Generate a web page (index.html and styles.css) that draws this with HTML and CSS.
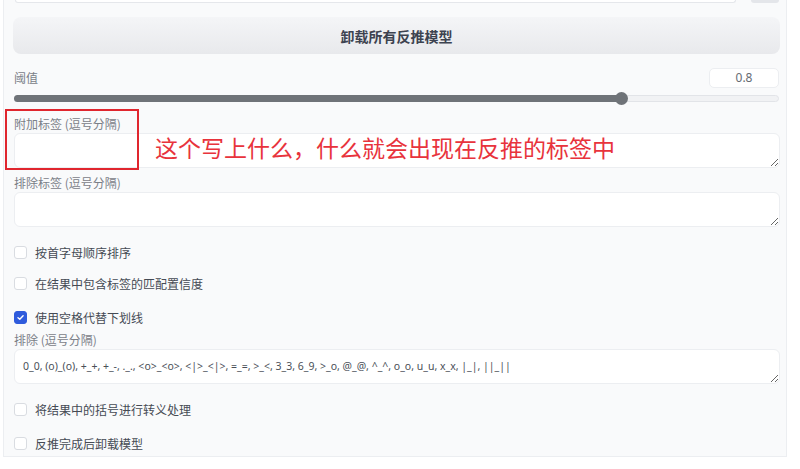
FILE: index.html
```html
<!DOCTYPE html>
<html lang="zh">
<head>
<meta charset="utf-8">
<link rel="stylesheet" href="styles.css">
</head>
<body>
<div class="panel">
  <div class="topbar">
    <div class="top-input"></div>
    <div class="top-btn"></div>
  </div>
  <button class="unload">卸载所有反推模型</button>
  <div class="thresh-row">
    <span class="label">阈值</span>
    <div class="num">0.8</div>
  </div>
  <div class="slider">
    <div class="track"><div class="fill" style="width:79.5%"></div><div class="thumb" style="left:79.5%"></div></div>
  </div>
  <div class="field f1">
    <div class="label">附加标签 (逗号分隔)</div>
    <textarea class="ta"></textarea>
  </div>
  <div class="field f2">
    <div class="label">排除标签 (逗号分隔)</div>
    <textarea class="ta"></textarea>
  </div>
  <div class="check c1"><span class="box"></span><span>按首字母顺序排序</span></div>
  <div class="check c2"><span class="box"></span><span>在结果中包含标签的匹配置信度</span></div>
  <div class="check c3"><span class="box on"><svg viewBox="0 0 14 14" width="13" height="13"><path d="M3.8 7.2 L6.1 9.3 L10.3 4.9" fill="none" stroke="#fff" stroke-width="1.8" stroke-linecap="round" stroke-linejoin="round"/></svg></span><span>使用空格代替下划线</span></div>
  <div class="field f3">
    <div class="label">排除 (逗号分隔)</div>
    <textarea class="ta small">0_0, (o)_(o), +_+, +_-, ._., &lt;o&gt;_&lt;o&gt;, &lt;|&gt;_&lt;|&gt;, =_=, &gt;_&lt;, 3_3, 6_9, &gt;_o, @_@, ^_^, o_o, u_u, x_x, |_|, ||_||</textarea>
  </div>
  <div class="check c4"><span class="box"></span><span>将结果中的括号进行转义处理</span></div>
  <div class="check c5"><span class="box"></span><span>反推完成后卸载模型</span></div>

  <div class="annot-box"></div>
  <div class="annot-text">这个写上什么，什么就会出现在反推的标签中</div>
</div>
</body>
</html>
```
FILE: styles.css
```css
html, body {
  margin: 0;
  padding: 0;
  background: #ffffff;
  font-family: "Noto Sans", "Noto Sans CJK SC", sans-serif;
}
.panel {
  position: relative;
  margin-left: 3px;
  width: 784px;
  height: 457px;
  box-sizing: border-box;
  padding: 0 7px 0 10px;
  background: #f9fafb;
  border-left: 1px solid #eceef1;
  border-right: 1px solid #eceef1;
  border-bottom: 1px solid #eceef1;
}
.topbar {
  display: flex;
  height: 3px;
  gap: 15px;
}
.top-input {
  margin-left: 1px;
  width: 720px;
  height: 2px;
  background: #fff;
  border: 1px solid #e5e7eb;
  border-top: none;
  border-radius: 0 0 4px 4px;
}
.top-btn {
  width: 28px;
  height: 3px;
  background: #e4e6ea;
  border-radius: 0 0 4px 4px;
}
.unload {
  display: block;
  margin: 14px 0 0 -1px;
  width: 767px;
  height: 37px;
  border: none;
  border-radius: 8px;
  background: linear-gradient(#f4f5f7, #e8e9ec);
  font-family: "Noto Sans CJK SC", sans-serif;
  font-size: 14px;
  font-weight: 700;
  color: #3d4350;
  padding: 0;
}
.thresh-row {
  margin-top: 14px;
  width: 765px;
  display: flex;
  justify-content: space-between;
  align-items: center;
  height: 20px;
}
.label {
  font-family: "Noto Sans CJK SC", sans-serif;
  font-size: 12px;
  line-height: 16px;
  color: #7b8088;
}
.num {
  width: 68px;
  height: 18px;
  background: #fff;
  border: 1px solid #eceef1;
  border-radius: 5px;
  font-size: 12px;
  line-height: 18px;
  text-align: center;
  color: #666b73;
}
.slider {
  height: 20px;
  display: flex;
  align-items: center;
}
.track {
  position: relative;
  width: 764px;
  height: 5px;
  border: 1px solid #e2e4e8;
  border-radius: 4px;
  background: #f1f2f4;
}
.fill {
  height: 100%;
  margin: -1px 0 0 -1px;
  padding: 1px 0 1px 1px;
  background: #6f7378;
  border-radius: 4px 0 0 4px;
}
.thumb {
  position: absolute;
  top: 50%;
  width: 13px;
  height: 13px;
  margin: -6.5px 0 0 -6.5px;
  border-radius: 50%;
  background: #6f7378;
}
.field .label { margin-bottom: 1px; }
.f1 { margin-top: 8px; }
.f2 { margin-top: 7px; }
.f3 { margin-top: 5px; }
.ta {
  display: block;
  width: 766px;
  height: 35px;
  box-sizing: border-box;
  margin: 0;
  background: #fff;
  border: 1px solid #eceef1;
  border-radius: 6px;
  resize: vertical;
  outline: none;
  font-family: "Noto Sans", sans-serif;
  font-size: 12px;
  color: #3d4350;
  padding: 0 8px;
}
.ta.small {
  font-size: 10.5px;
  line-height: 33px;
  color: #4a4f58;
  overflow: hidden;
  white-space: nowrap;
}
.check {
  display: flex;
  align-items: center;
  gap: 8px;
  height: 20px;
  font-family: "Noto Sans CJK SC", sans-serif;
  font-size: 12px;
  color: #454a54;
}
.box {
  width: 13px;
  height: 13px;
  box-sizing: border-box;
  border: 1px solid #d9dce1;
  border-radius: 3px;
  background: #fff;
  display: flex;
  align-items: center;
  justify-content: center;
}
.box.on {
  background: #2f5bdc;
  border-color: #2f5bdc;
}
.c1 { margin-top: 15px; }
.c2 { margin-top: 11px; }
.c3 { margin-top: 14px; }
.c4 { margin-top: 15px; }
.c5 { margin-top: 14px; }
.annot-box {
  position: absolute;
  left: 1px;
  top: 109px;
  width: 134px;
  height: 61px;
  box-sizing: border-box;
  border: 2px solid #e0262e;
}
.annot-text {
  position: absolute;
  left: 151px;
  top: 133px;
  font-family: "Noto Sans CJK SC", sans-serif;
  font-size: 23px;
  line-height: 28px;
  color: #e8333c;
  white-space: nowrap;
}
```
